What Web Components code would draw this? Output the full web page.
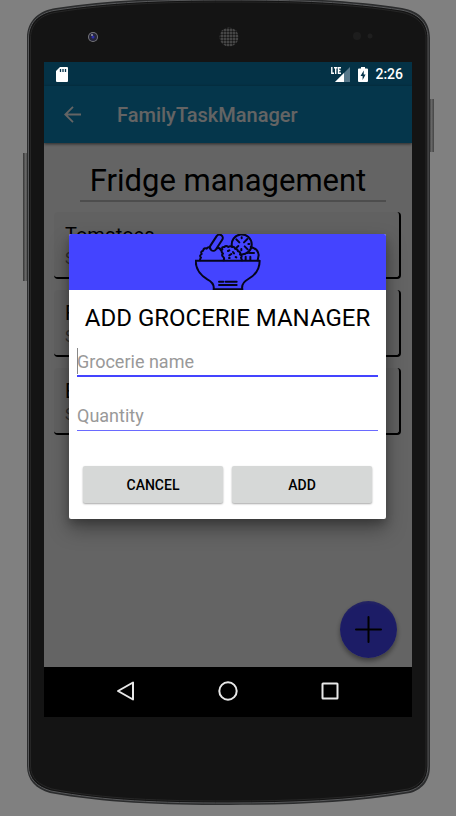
<!DOCTYPE html>
<html lang="en">
<head>
<meta charset="utf-8">
<meta name="viewport" content="width=device-width, initial-scale=1">
<title>FamilyTaskManager</title>
<style>
html, body { margin: 0; }
body { background: #808080; font-family: Roboto, "Liberation Sans", sans-serif; color: #000; }
</style>
</head>
<body>
<phone-frame>
  <status-bar time="2:26"></status-bar>
  <app-bar>FamilyTaskManager</app-bar>
  <fridge-page>
    <grocery-card name="Tomatoes">S</grocery-card>
    <grocery-card name="F">S</grocery-card>
    <grocery-card name="E">S</grocery-card>
  </fridge-page>
  <nav-bar></nav-bar>
  <grocery-dialog slot="overlay">
    <text-field label="Grocerie name" focused></text-field>
    <text-field label="Quantity"></text-field>
    <dialog-button slot="actions">CANCEL</dialog-button>
    <dialog-button slot="actions">ADD</dialog-button>
  </grocery-dialog>
</phone-frame>

<script>
const define = (name, markup, setup) => customElements.define(name, class extends HTMLElement {
  connectedCallback() {
    if (this.shadowRoot) return;
    const t = document.createElement('template');
    t.innerHTML = markup;
    this.attachShadow({ mode: 'open' }).append(t.content.cloneNode(true));
    if (setup) setup(this, this.shadowRoot);
  }
});

define('phone-frame', `
<style>
:host { display: flex; position: relative; box-sizing: border-box; min-height: 100vh; padding: 62px 44px 99px; }
.body { position: absolute; inset: 0; width: 100%; height: 100%; }
.screen { position: relative; flex: 1; min-width: 0; display: flex; flex-direction: column; background: #fafafa; overflow: hidden; }
</style>
<svg class="body" viewBox="0 0 456 816" preserveAspectRatio="none" aria-hidden="true">
  <defs>
    <linearGradient id="key"><stop offset="0" stop-color="#333"/><stop offset=".5" stop-color="#666"/><stop offset="1" stop-color="#444"/></linearGradient>
    <pattern id="mesh" width="3" height="3" patternUnits="userSpaceOnUse"><rect width="3" height="3" fill="#555"/><circle cx="1.5" cy="1.5" r="1.2" fill="#161616"/></pattern>
  </defs>
  <rect x="23" y="153" width="5" height="128" fill="url(#key)"/>
  <rect x="429" y="99" width="5" height="53" fill="url(#key)"/>
  <path d="M27 38C27 20 40 10 56 8C110 0 160 -2 228 -2C300 -2 350 0 402 8C420 11 430 22 430 38V766C430 782 421 790 410 793C350 803 290 805 228 805C160 805 105 803 50 793C36 789 27 780 27 766Z" fill="#2b2c2d"/>
  <path d="M28.500 38C28.500 21 41 12 57 10C110 2 160 0 228 0C300 0 350 2 401 10C418 13 428 23 428 38V766C428 780 420 788 409 791C350 801 290 803 228 803C160 803 105 801 51 791C37 787 28.500 779 28.500 766Z" fill="#141414" stroke="#58595b"/>
  <path d="M30.500 38C30.500 23 42 14 58 12C110 4 160 2 228 2C300 2 350 4 400 12C416 15 426 24 426 38V766C426 778 419 786 408 789C350 799 290 801 228 801C160 801 105 799 52 789C39 785 30.500 778 30.500 766Z" fill="#141414" stroke="#262626"/>
  <circle cx="93" cy="37" r="5" fill="#77777d"/><circle cx="93" cy="37" r="4" fill="#25253a"/><circle cx="93" cy="37" r="1.500" fill="#2d2da8"/><circle cx="92" cy="35" r="1" fill="#99a"/>
  <circle cx="229" cy="37" r="9.500" fill="url(#mesh)"/>
  <circle cx="357" cy="36" r="4" fill="#1d1d1d"/><circle cx="370" cy="36" r="2.500" fill="#1f1f1f"/>
</svg>
<div class="screen"><slot></slot><slot name="overlay"></slot></div>`);

define('status-bar', `
<style>
:host { display: flex; height: 24px; background: #0c7daf; }
.row { position: relative; z-index: 3; flex: 1; display: flex; align-items: center; padding: 0 9px 0 12px; color: #fff; font-size: 14px; line-height: 24px; font-weight: 500; }
.time { margin-left: 7px; }
.signal { margin-left: auto; }
.battery { margin-left: 8px; }
svg { display: block; }
</style>
<div class="row">
  <svg width="12" height="15" viewBox="0 0 12 15"><path d="M4 0h7a1 1 0 0 1 1 1v13a1 1 0 0 1-1 1H1a1 1 0 0 1-1-1V4z" fill="#fff"/><path d="M4.500 2v3M7 2v3M9.500 2v3" stroke="#05334a" stroke-width="1.300"/></svg>
  <svg class="signal" width="19" height="15" viewBox="0 0 19 15"><path d="M19 0V15H4z" fill="#58788a"/><path d="M13 6V15H4z" fill="#fff"/><path d="M.8 0V6.200H3M3 .8H6.400M4.700 .8V7M10 .8H7.500V6.200H10M7.500 3.500H9.500" fill="none" stroke="#fff" stroke-width="1.400"/></svg>
  <svg class="battery" width="10" height="15" viewBox="0 0 10 15"><path d="M3 0h4v1.500h2a1 1 0 0 1 1 1V14a1 1 0 0 1-1 1H1a1 1 0 0 1-1-1V2.500a1 1 0 0 1 1-1h2z" fill="#fff"/><path d="M5.800 3.500L2.500 9H4.600V13L7.600 7.400H5.700z" fill="#05334a"/></svg>
  <span class="time"></span>
</div>`, (h, r) => { r.querySelector('.time').textContent = h.getAttribute('time'); });

define('app-bar', `
<style>
:host { display: flex; position: relative; align-items: center; height: 57px; padding: 0 20px; gap: 36px; background: #0d87bb; box-shadow: 0 1px 3px rgba(0,0,0,.6); color: #fafafa; }
button { display: block; border: 0; padding: 0; background: none; color: inherit; width: 17px; height: 17px; }
h1 { margin: 0; font-size: 20px; line-height: 26px; font-weight: 500; }
svg { display: block; }
</style>
<button aria-label="Back"><svg width="17" height="17" viewBox="0 0 17 17" fill="none" stroke="currentColor" stroke-width="1.800"><path d="M17 8.500H1.500M9 .8L1.300 8.500L9 16.200"/></svg></button>
<h1><slot></slot></h1>`);

define('fridge-page', `
<style>
:host { display: block; position: relative; flex: 1; padding: 18px 11px 0 10px; }
h2 { margin: 0 15px 10px 26px; padding-right: 10px; border-bottom: 2px solid #c0c0c0; text-align: center; font-size: 31px; line-height: 39px; font-weight: 400; color: #000; }
.list { display: grid; gap: 11px; }
button { position: absolute; right: 15px; bottom: 9px; width: 57px; height: 57px; padding: 0; border: 0; border-radius: 50%; background: radial-gradient(circle at 50% 55%, #4848ff 0 66%, #5858f4 72%); box-shadow: 0 3px 5px rgba(0,0,0,.4); display: grid; place-items: center; }
</style>
<h2>Fridge management</h2>
<div class="list"><slot></slot></div>
<button aria-label="Add grocery"><svg width="27" height="27" viewBox="0 0 27 27" stroke="#000" stroke-width="2" stroke-linecap="round"><path d="M13.500 1V26M1 13.500H26"/></svg></button>`);

define('grocery-card', `
<style>
:host { display: block; box-sizing: border-box; height: 67px; padding: 11px 11px 0; background: #f2f2f2; border-radius: 4px; border-right: 2px solid #000; border-bottom: 2px solid #000; }
.name { font-size: 20px; line-height: 24px; color: #000; }
.qty { font-size: 16px; line-height: 23px; color: #777; }
</style>
<div class="name"></div><div class="qty"><slot></slot></div>`,
(h, r) => { r.querySelector('.name').textContent = h.getAttribute('name'); });

define('nav-bar', `
<style>
:host { display: flex; box-sizing: border-box; height: 50px; background: #000; align-items: center; justify-content: space-between; padding: 0 72px 2px; }
button { display: block; border: 0; padding: 0; background: none; width: 20px; height: 20px; }
svg { display: block; }
</style>
<button aria-label="Back"><svg width="20" height="20" viewBox="0 0 20 20" fill="none" stroke="#e8e8e8" stroke-width="2" stroke-linejoin="round"><path d="M17 1.500V18.500L2 10z"/></svg></button>
<button aria-label="Home"><svg width="20" height="20" viewBox="0 0 20 20" fill="none" stroke="#e8e8e8" stroke-width="2"><circle cx="10" cy="10" r="8.700"/></svg></button>
<button aria-label="Recents"><svg width="20" height="20" viewBox="0 0 20 20" fill="none" stroke="#e8e8e8" stroke-width="2"><rect x="2.500" y="2.500" width="15" height="15" rx=".5"/></svg></button>`);

define('grocery-dialog', `
<style>
:host { display: flex; position: absolute; inset: 0 0 50px; z-index: 2; padding: 24px 26px 0 25px; align-items: center; background: rgba(0,0,0,.6); }
.panel { flex: 1; min-width: 0; background: #fff; border-radius: 2px; overflow: hidden; box-shadow: 0 10px 20px rgba(0,0,0,.35), 0 4px 8px rgba(0,0,0,.2); }
header { display: flex; justify-content: center; height: 56px; background: #4444ff; }
svg { display: block; }
h2 { margin: 0; padding-top: 12px; text-align: center; font-size: 24px; line-height: 32px; font-weight: 400; white-space: nowrap; }
.fields { display: grid; padding: 8px 8px 0; }
.actions { display: grid; grid-template-columns: 1fr 1fr; gap: 9px; padding: 16px 14px; }
</style>
<div class="panel" role="dialog" aria-labelledby="t">
  <header><svg width="66" height="56" viewBox="45 27 198 168" fill="none" stroke="#05051c" stroke-width="6" stroke-linecap="round" stroke-linejoin="round" aria-hidden="true">
    <path d="M47 107H239C239 132 228 149 205 162C189 171 184 180 187 193H101C103 180 98 171 82 163C60 150 47 135 47 107Z"/>
    <path d="M117 170H130M137 170H170M117 180H170"/>
    <rect x="99" y="26" width="20" height="54" rx="10" transform="rotate(33 109 53)"/>
    <path d="M60 106Q60 101 63 98Q57 92 65 87Q61 79 69 77Q72 67 80 71Q86 63 91 70M112 70Q119 67 122 75"/>
    <path d="M131 106Q134 99 130 96Q123 90 129 86Q121 78 127 73Q124 65 133 66Q138 60 145 66Q151 61 157 66Q163 64 165 71Q173 71 174 79Q183 81 180 88Q188 93 183 98L186 106"/>
    <path d="M144 78L148 76M159 81L162 85M148 91L154 87M147 99H149M167 96L169 97"/>
    <path d="M156 65A30 30 0 1 1 182 88"/>
    <path d="M169 43L178 52M202 42L192 52M185 37V40M169 68L175 63M194 64L203 73M205 57H208M184 72V76"/>
    <path d="M212 66Q234 71 236 90L233 106M197 95V105M209 84H222M202 84H204M211 95V104"/>
  </svg></header>
  <h2 id="t">ADD GROCERIE MANAGER</h2>
  <div class="fields"><slot></slot></div>
  <div class="actions"><slot name="actions"></slot></div>
</div>`);

define('text-field', `
<style>
:host { display: block; position: relative; box-sizing: border-box; height: 54px; padding-top: 5px; }
:host([focused])::before { content: ""; position: absolute; left: 0; top: 6px; width: 1px; height: 26px; background: #888; }
input { display: block; box-sizing: border-box; width: 100%; height: 30px; margin: 0; padding: 0; border: 0; border-bottom: 1px solid #6a6aff; border-radius: 0; outline: 0; background: transparent; font: 400 18px/28px Roboto, "Liberation Sans", sans-serif; color: #000; }
:host([focused]) input { border-bottom: 2px solid #4444ff; }
input::placeholder { color: #999; opacity: 1; }
</style>
<input type="text">`, (h, r) => {
  const i = r.querySelector('input');
  i.placeholder = h.getAttribute('label');
  i.setAttribute('aria-label', h.getAttribute('label'));
});

define('dialog-button', `
<style>
:host { display: block; }
button { display: block; width: 100%; height: 37px; border: 0; border-radius: 2px; padding: 0; background: #d6d8d7; box-shadow: 0 1px 2px rgba(0,0,0,.35); font: 500 14px/20px Roboto, "Liberation Sans", sans-serif; color: #000; }
</style>
<button type="button"><slot></slot></button>`);
</script>
</body>
</html>
